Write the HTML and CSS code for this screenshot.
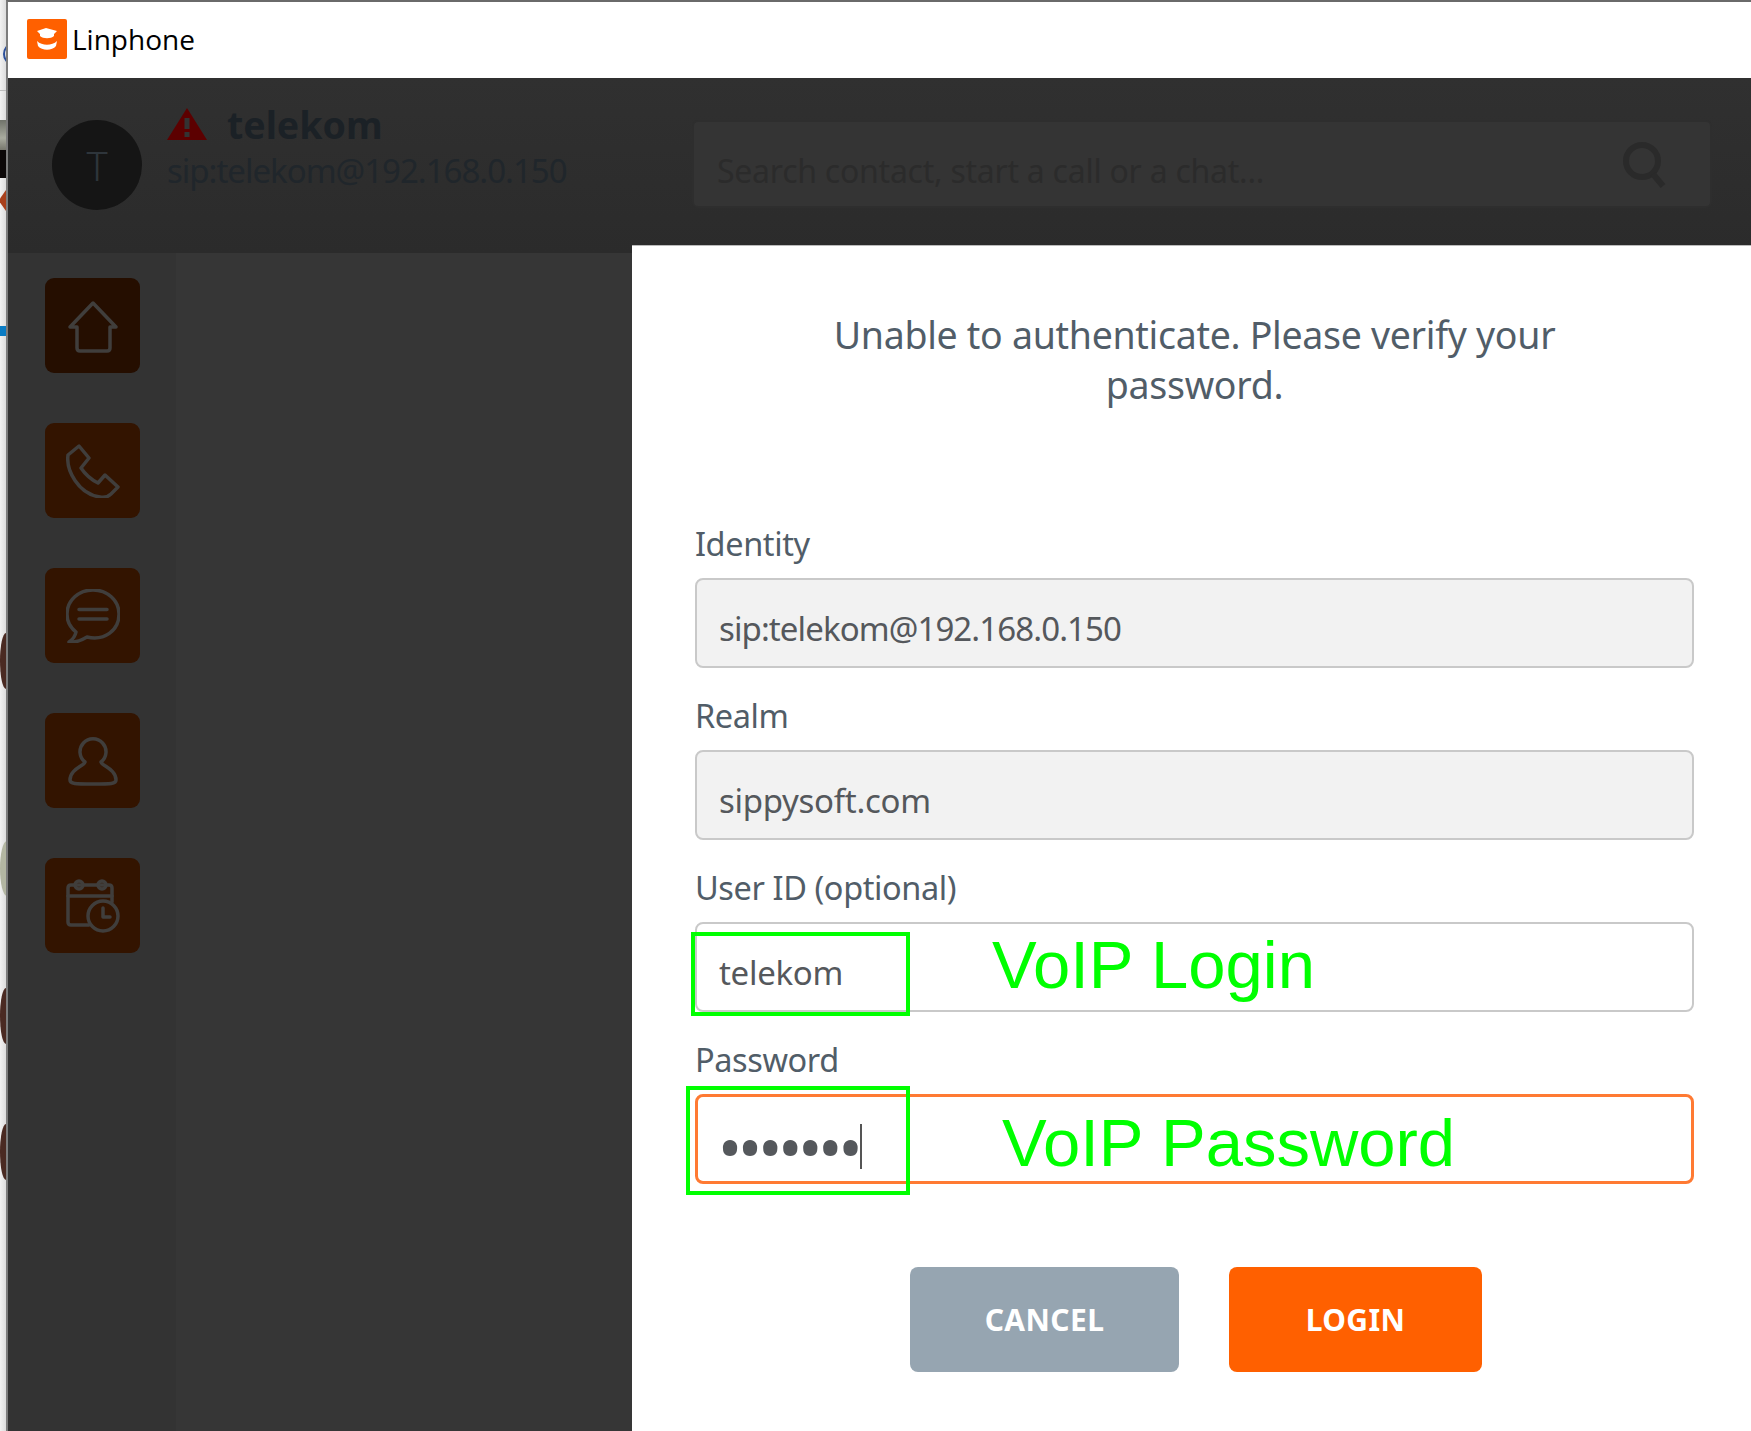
FILE: index.html
```html
<!DOCTYPE html>
<html lang="en">
<head>
<meta charset="utf-8">
<title>Linphone</title>
<link rel="stylesheet" href="styles.css">
</head>
<body>
<div class="desktop">
  <div class="desk-strip">
    <span class="bit bit-ring"></span>
    <span class="bit bit-line"></span>
    <span class="bit bit-photo"></span>
    <span class="bit bit-black"></span>
    <span class="bit bit-red"></span>
    <span class="bit bit-blue"></span>
    <span class="bit bit-brown b1"></span>
    <span class="bit bit-green"></span>
    <span class="bit bit-brown b2"></span>
    <span class="bit bit-brown b3"></span>
  </div>
  <div class="window">
    <div class="titlebar">
      <svg class="logo" viewBox="0 0 40 40">
        <rect width="40" height="40" rx="2" fill="#ff6000"/>
        <path d="M10 12 19 9 30 12 27 15v2c-3 3-11 3-14 0v-2z" fill="#fff"/>
        <path d="M10 22c5 5 15 5 20 0l-1 5c-4 5-14 5-18 0z" fill="#fff"/>
      </svg>
      <span class="app-name">Linphone</span>
    </div>
    <div class="app">
      <header class="app-header">
        <div class="avatar">T</div>
        <div class="account">
          <div class="account-name">
            <svg class="warn" viewBox="0 0 40 34">
              <path d="M20 1 40 33H0z" fill="#5c0000"/>
              <rect x="17.500" y="11" width="5" height="11" fill="#333"/>
              <rect x="17.500" y="25" width="5" height="5" fill="#333"/>
            </svg>
            <span>telekom</span>
          </div>
          <div class="account-sip">sip:telekom@192.168.0.150</div>
        </div>
        <div class="search">
          <span>Search contact, start a call or a chat...</span>
          <svg class="search-icon" viewBox="0 0 46 46">
            <circle cx="20" cy="19" r="16" fill="none" stroke="#2a2a2a" stroke-width="6"/>
            <path d="M31 32 41 44" fill="none" stroke="#2a2a2a" stroke-width="6"/>
          </svg>
        </div>
      </header>
      <div class="app-body">
        <nav class="sidebar">
          <div class="nav-btn nav-home">
            <svg viewBox="0 0 54 54"><path d="M27 4 4 28h7v21c0 2 1 3 3 3h27c2 0 3-1 3-3V28h6z"/></svg>
          </div>
          <div class="nav-btn">
            <svg viewBox="0 0 54 54"><path d="M13 2 2 11C0 26 12 50 34 53c5 1 9-1 11-3l7-7-13-12-7 8c-8-4-13-9-17-15l8-10z"/></svg>
          </div>
          <div class="nav-btn">
            <svg viewBox="0 0 54 54"><path d="M10 43c-1 5-4 8-7 10 7 1 13-2 18-5 17 4 32-6 32-23C53 11 41 1 27 1S1 11 1 25c0 8 4 14 9 18z"/><path d="M13 20.500h28M13 30h28"/></svg>
          </div>
          <div class="nav-btn">
            <svg viewBox="0 0 54 54"><path d="M19 28a13 13 0 1 1 16 0c1 4 15 7 15 18 0 4-5 4-23 4S4 50 4 46c0-11 14-14 15-18z"/></svg>
          </div>
          <div class="nav-btn">
            <svg viewBox="0 0 54 54"><path d="M23 46H5c-2 0-3-1-3-3V9c0-2 1-3 3-3h38c2 0 3 1 3 3v14"/><path d="M2 17h44"/><circle cx="13" cy="6" r="4"/><circle cx="36" cy="6" r="4"/><circle cx="37" cy="37" r="15"/><path d="M37 29v9h7"/></svg>
          </div>
        </nav>
        <div class="content"></div>
      </div>
      <section class="dialog">
        <p class="message">Unable to authenticate. Please verify your password.</p>
        <form class="form">
          <div class="field">
            <div class="label">Identity</div>
            <div class="input input-off input-tight">sip:telekom@192.168.0.150</div>
          </div>
          <div class="field">
            <div class="label">Realm</div>
            <div class="input input-off">sippysoft.com</div>
          </div>
          <div class="field">
            <div class="label">User ID (optional)</div>
            <div class="input">telekom</div>
            <span class="mark mark-login"></span>
            <span class="note note-login">VoIP Login</span>
          </div>
          <div class="field">
            <div class="label">Password</div>
            <div class="input input-focus"><span class="dots">•••••••</span><span class="caret"></span></div>
            <span class="mark mark-pass"></span>
            <span class="note note-pass">VoIP Password</span>
          </div>
        </form>
        <div class="actions">
          <div class="btn btn-cancel">CANCEL</div>
          <div class="btn btn-login">LOGIN</div>
        </div>
      </section>
    </div>
  </div>
</div>
</body>
</html>
```
FILE: styles.css
```css
* { box-sizing: border-box; }
html, body { margin: 0; padding: 0; }
body { width: 1751px; height: 1431px; overflow: hidden; background: #e6e6e6; font-family: "Noto Sans", sans-serif; }
.desktop { display: flex; width: 1751px; height: 1431px; }

.desk-strip { position: relative; width: 6px; flex: none; background: linear-gradient(90deg, #f2f2f2, #dcdcdc); overflow: hidden; }
.bit { position: absolute; display: block; }
.bit-ring { left: 3px; top: 44px; width: 16px; height: 20px; border: 2px solid #2b4f9a; border-radius: 50%; }
.bit-line { left: 0; top: 90px; width: 6px; height: 1px; background: #bdbdbd; }
.bit-photo { left: 0; top: 120px; width: 6px; height: 30px; background: linear-gradient(#70736a, #a9ab9f 60%, #77776d); }
.bit-black { left: 0; top: 150px; width: 6px; height: 28px; background: #0c0808; }
.bit-red { left: 0; top: 190px; width: 6px; height: 21px; background: #a8401c; clip-path: polygon(100% 0, 100% 100%, 0 60%, 0 40%); }
.bit-blue { left: 0; top: 326px; width: 6px; height: 10px; background: #0a7cc4; }
.bit-brown { left: 0; width: 12px; height: 56px; border-radius: 50%; background: #4a2a22; }
.b1 { top: 633px; }
.b2 { top: 988px; }
.b3 { top: 1124px; }
.bit-green { left: 0; top: 841px; width: 14px; height: 55px; border-radius: 50%; background: #b3b6a2; }

.window { flex: 1; display: flex; flex-direction: column; border-left: 2px solid #7c7c7c; border-top: 2px solid #6a6a6a; min-width: 0; }
.titlebar { height: 76px; flex: none; background: #fff; display: flex; align-items: center; gap: 5px; padding: 0 0 2px 19px; }
.logo { width: 40px; height: 40px; flex: none; }
.app-name { font-family: "Open Sans", sans-serif; font-size: 28px; color: #000; }

.app { position: relative; flex: 1; display: flex; flex-direction: column; min-height: 0; background: #363636; }
.app-header { height: 175px; flex: none; display: flex; background: linear-gradient(#303030, #2b2b2b); padding: 42px 0 0 44px; }
.avatar { width: 90px; height: 90px; flex: none; border-radius: 50%; background: #151515; color: #2e353b; font-size: 40px; font-weight: 300; display: flex; align-items: center; justify-content: center; }
.account { width: 550px; flex: none; padding: 0 0 0 25px; margin-top: -14px; }
.account-name { display: flex; align-items: center; gap: 20px; height: 40px; margin-top: -2px; color: #1b2126; font-size: 37.500px; font-weight: 700; }
.warn { width: 40px; height: 34px; flex: none; }
.account-sip { color: #20262b; font-size: 33px; line-height: 46px; margin-top: 4px; letter-spacing: -1px; }
.search { position: relative; width: 1020px; height: 88px; flex: none; margin-top: 0; background: #343434; border: 2px solid #2e2e2e; border-radius: 6px; color: #2b2b2b; font-size: 32px; line-height: 97px; padding-left: 23px; letter-spacing: -.25px; white-space: nowrap; }
.search-icon { position: absolute; right: 42px; top: 20px; width: 46px; height: 46px; }

.app-body { flex: 1; display: flex; min-height: 0; }
.sidebar { width: 168px; flex: none; background: #333; display: flex; flex-direction: column; gap: 50px; padding: 25px 0 0 37px; }
.nav-btn { width: 95px; height: 95px; border-radius: 9px; background: #331400; display: flex; align-items: center; justify-content: center; }
.nav-home { background: #250e00; }
.nav-btn svg { width: 54px; height: 54px; fill: none; stroke: #403e3c; stroke-width: 3.500; stroke-linejoin: round; stroke-linecap: round; }
.content { flex: 1; background: #363636; }

.dialog { position: absolute; right: 0; top: 167px; bottom: 0; width: 1119px; background: #fff; border-top: 1px solid #bbb; display: flex; flex-direction: column; align-items: center; padding: 64px 57px 0 63px; color: #515d68; }
.message { width: 760px; margin: 0; text-align: center; font-size: 37.500px; line-height: 50px; letter-spacing: -.3px; }
.form { align-self: stretch; display: flex; flex-direction: column; gap: 28px; margin-top: 114px; }
.field { position: relative; }
.label { font-size: 32.500px; line-height: 40px; height: 54px; letter-spacing: -.4px; color: #515d68; }
.input { height: 90px; border: 2px solid #c9c9c9; border-radius: 8px; background: #fff; color: #55585c; font-size: 33px; padding: 11px 0 0 22px; letter-spacing: -.3px; display: flex; align-items: center; }
.input-off { background: #f2f2f2; }
.input-tight { letter-spacing: -.9px; }
.input-focus { border: 3px solid #ff7a33; padding: 15px 0 0 20px; }
.dots { font-size: 64px; letter-spacing: -4px; line-height: 1; }
.caret { width: 2px; height: 45px; background: #555; margin-left: 2px; }
.mark { position: absolute; border: 4px solid #00ff00; }
.mark-login { left: -4px; top: 64px; width: 219px; height: 84px; }
.mark-pass { left: -9px; top: 46px; width: 224px; height: 109px; }
.note { position: absolute; color: #00ff00; font-family: "Liberation Sans", sans-serif; font-size: 67px; line-height: 80px; white-space: nowrap; }
.note-login { left: 297px; top: 57px; }
.note-pass { left: 307px; top: 63px; }

.actions { display: flex; gap: 50px; margin: 83px 0 0 3px; }
.btn { height: 105px; border-radius: 8px; color: #fff; font-size: 30px; font-weight: 700; display: flex; align-items: center; justify-content: center; letter-spacing: .4px; }
.btn-cancel { width: 269px; background: #96a5b1; }
.btn-login { width: 253px; background: #ff6000; }
```
